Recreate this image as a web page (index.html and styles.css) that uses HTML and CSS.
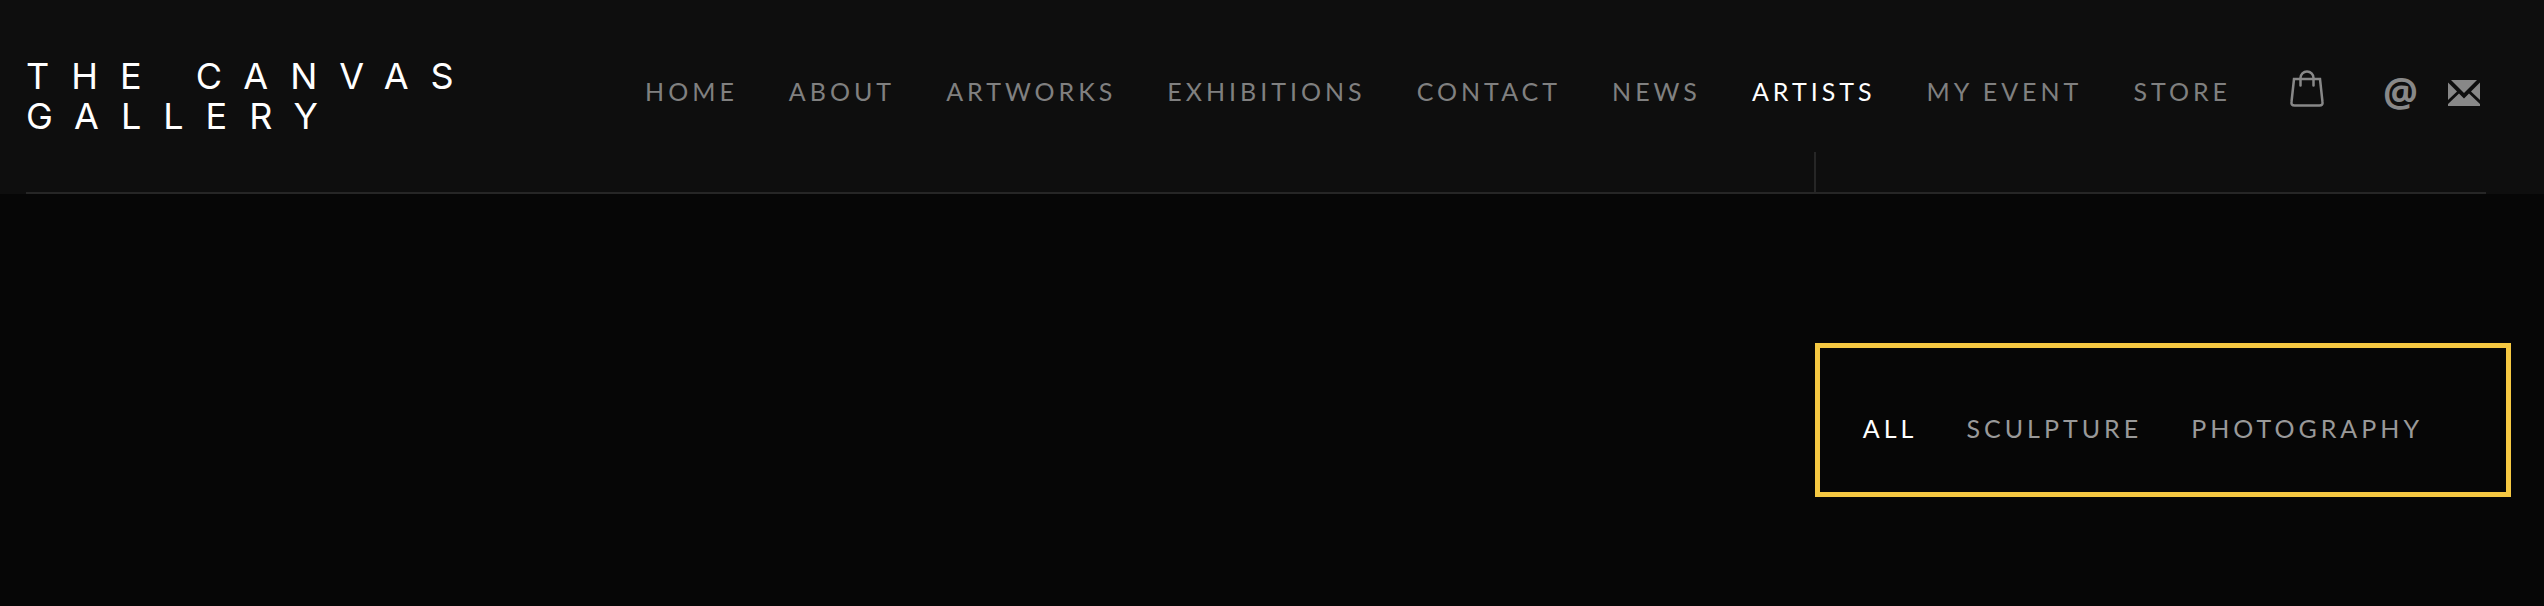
FILE: index.html
```html
<!DOCTYPE html>
<html lang="en">
<head>
    <meta charset="UTF-8">
    <title>The Canvas Gallery - Artists</title>
    <link rel="stylesheet" href="styles.css">
</head>

<body>

<header class="header">
    <div class="inner">
        <a class="logo" href="#">THE CANVAS GALLERY</a>
        <nav class="nav">
            <ul class="menu">
                <li><a href="#">HOME</a></li>
                <li><a href="#">ABOUT</a></li>
                <li><a href="#">ARTWORKS</a></li>
                <li><a href="#">EXHIBITIONS</a></li>
                <li><a href="#">CONTACT</a></li>
                <li><a href="#">NEWS</a></li>
                <li class="current"><a href="#">ARTISTS</a></li>
                <li><a href="#">MY EVENT</a></li>
                <li><a href="#">STORE</a></li>
            </ul>
        </nav>
        <div class="icons">
            <a class="bag" href="#" aria-label="Shopping bag">
                <svg width="36" height="40" viewBox="0 0 36 40" fill="none" stroke="currentColor" stroke-width="2.500" stroke-linecap="round">
                    <path d="M5 11H31L33.500 34Q34 37.500 30.500 37.500H5.500Q2 37.500 2.500 34Z"/>
                    <path d="M11.500 17.500V10a6.500 6.500 0 0 1 13 0v7.500"/>
                </svg>
            </a>
            <a class="at" href="#" aria-label="Contact">@</a>
            <a class="mail" href="#" aria-label="Email">
                <svg width="32" height="26" viewBox="0 0 32 26" fill="currentColor">
                    <path d="M3 0H29L16 13Z"/>
                    <path d="M0 2.500L9 11.500L0 20Z"/>
                    <path d="M32 2.500L23 11.500L32 20Z"/>
                    <path d="M0 24L11 13.500L16 18.500L21 13.500L32 24V26H0Z"/>
                </svg>
            </a>
        </div>
    </div>
</header>

<main class="main">
    <ul class="filter">
        <li class="current"><a href="#">ALL</a></li>
        <li><a href="#">SCULPTURE</a></li>
        <li><a href="#">PHOTOGRAPHY</a></li>
    </ul>
</main>

</body>
</html>
```
FILE: styles.css
```css
*{
    margin:0;
    padding:0;
    box-sizing: border-box;
}
body{
    background: #060606;
    font-family: Lato, "Liberation Sans", sans-serif;
    font-weight: 400;
}
ul{
    list-style-type: none;
}
a{
    color: inherit;
    text-decoration: none;
}
.header{
    background: #0e0e0e;
    padding: 0 58px 0 26px;
}
.inner{
    display: flex;
    align-items: flex-start;
    border-bottom: 2px solid #262626;
}
.logo{
    width: 480px;
    margin: 56px auto 56px 0;
    font-family: Inter, "Liberation Sans", sans-serif;
    font-size: 36px;
    line-height: 40px;
    letter-spacing: 22px;
    color: #fff;
}
.nav{
    align-self: stretch;
    margin-right: 58px;
}
.menu{
    display: flex;
    gap: 51px;
    height: 100%;
    font-size: 25px;
    line-height: 30px;
    letter-spacing: 4px;
    color: #808080;
    white-space: nowrap;
}
.menu li{
    position: relative;
    padding-top: 76px;
}
.menu .current,
.filter .current{
    color: #fff;
}
/* line under the active item */
.menu .current::after{
    content: "";
    position: absolute;
    left: 50%;
    bottom: 0;
    width: 2px;
    height: 40px;
    background: #262626;
}
.icons{
    display: flex;
    align-items: center;
    height: 46px;
    margin: 70px 6px 0 0;
    color: #888;
}
.icons a{
    display: block;
}
.icons svg{
    display: block;
}
.bag{
    margin: -10px 58px 0 0;
}
.at{
    margin-right: 30px;
    font-family: "Open Sans", "Liberation Sans", sans-serif;
    font-size: 39px;
    font-weight: 700;
    line-height: 40px;
    padding-bottom: 4px;
}
.main{
    display: flex;
    justify-content: flex-end;
    padding: 149px 33px 107px;
}
.filter{
    display: flex;
    gap: 49px;
    padding: 65px 83px 49px 43px;
    border: 5px solid #f5c842;
    font-size: 25px;
    line-height: 30px;
    letter-spacing: 4px;
    color: #999;
}
```
